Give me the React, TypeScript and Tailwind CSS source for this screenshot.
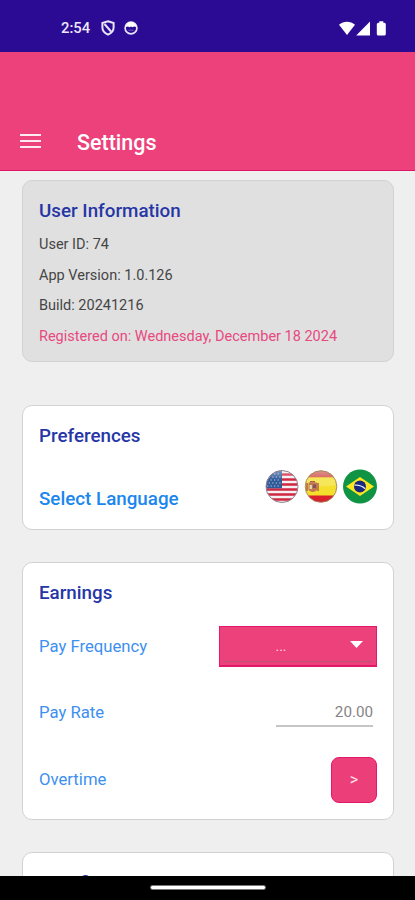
import type { ReactNode } from 'react';

function StatusBar() {
  return (
    <div className="flex h-[52px] shrink-0 items-center bg-[#2b0a94] pt-1 pr-[28px] pl-[61px] text-white">
      <span className="w-[40px] text-[14.8px] leading-5 font-medium text-[#ece8fb]">2:54</span>
      <svg className="h-4 w-[14px]" viewBox="0 0 14 16" fill="none" stroke="#e8e4fa" strokeWidth="2">
        <path d="M7 1.200 12.600 3v4.600c0 3.200-2 5.600-5.600 7-3.600-1.400-5.600-3.800-5.600-7V3z" />
        <path d="m3.500 4 6.500 7.500" />
      </svg>
      <svg className="ml-[9px] h-[14px] w-[14px]" viewBox="0 0 14 14">
        <circle cx="7" cy="7" r="5.900" fill="none" stroke="#e8e4fa" strokeWidth="1.700" />
        <path d="M1.500 6C2 3 4.500 1 7 1s5 2 5.500 5L10 5.500 8.500 6.200 7 5.500l-1.500.7L4 5.500z" fill="#fff" />
        <path d="M4.500 9.200h5" stroke="#6f5cc0" />
      </svg>
      <svg className="ml-auto h-[15px] w-[48px]" viewBox="0 0 48 15" fill="#fff">
        <path d="M0 3.800C4.500-.3 11.500-.3 16 3.800L8 14z" />
        <path d="M31 .6V14.400H17.200z" />
        <path d="M39.300 1.800h1V.3h4v1.500h1a1.500 1.500 0 0 1 1.500 1.500v9.700a1.500 1.500 0 0 1-1.500 1.500h-6a1.500 1.500 0 0 1-1.500-1.500V3.300a1.500 1.500 0 0 1 1.500-1.500z" />
      </svg>
    </div>
  );
}

function Header() {
  return (
    <header className="flex h-[119px] shrink-0 items-end border-b border-[#dc1768] bg-[#ed417b] pb-[13px] pl-5 text-white">
      <button aria-label="Menu" className="mb-[9px] flex w-[21px] flex-col gap-[4px]">
        <span className="h-[2px] bg-[#ffeaf2]" />
        <span className="h-[2px] bg-[#ffeaf2]" />
        <span className="h-[2px] bg-[#ffeaf2]" />
      </button>
      <h1 className="ml-9 text-[21.5px] leading-7 font-medium">Settings</h1>
    </header>
  );
}

function Card({ title, className, children }: { title: string; className: string; children?: ReactNode }) {
  return (
    <section className={`shrink-0 rounded-[10px] border border-[#d2d2d2] px-4 ${className}`}>
      <h2 className="pt-[18px] text-[18.8px] leading-6 font-medium text-[#2736a6]">{title}</h2>
      {children}
    </section>
  );
}

function UsFlag() {
  return (
    <svg className="h-[35px] w-[34px]" viewBox="0 0 34 35">
      <defs>
        <clipPath id="us">
          <circle cx="17" cy="17.500" r="16" />
        </clipPath>
        <linearGradient id="usShine" x1="0" y1="0" x2="0" y2="1">
          <stop offset="0" stopColor="#fff" stopOpacity=".45" />
          <stop offset=".6" stopColor="#fff" stopOpacity="0" />
        </linearGradient>
      </defs>
      <g clipPath="url(#us)">
        <path fill="#f4eff2" d="M0 0h34v35H0z" />
        <path
          stroke="#cf2740"
          strokeWidth="2.500"
          d="M0 5.500h34M0 10.500h34M0 15.500h34M0 20.500h34M0 25.500h34M0 30.500h34"
        />
        <path fill="#315a99" d="M0 0h17v19.200H0z" />
        <path
          stroke="#b4c8e3"
          strokeWidth="1.200"
          strokeDasharray="1.300 2.200"
          d="M2 5h14M3.700 8h13M2 11h14M3.700 14h13M2 17h14"
        />
        <path fill="url(#usShine)" d="M0 0h34v18H0z" />
      </g>
      <circle cx="17" cy="17.500" r="16" fill="none" stroke="#8f8290" />
    </svg>
  );
}

function SpainFlag() {
  return (
    <svg className="h-[35px] w-[34px]" viewBox="0 0 34 35">
      <defs>
        <clipPath id="es">
          <circle cx="17" cy="17.500" r="15.800" />
        </clipPath>
        <linearGradient id="esTop" x1="0" y1="0" x2="0" y2="1">
          <stop offset="0" stopColor="#db9a99" />
          <stop offset="1" stopColor="#db6b65" />
        </linearGradient>
      </defs>
      <g clipPath="url(#es)">
        <path fill="#f3df2c" d="M0 0h34v35H0z" />
        <path fill="url(#esTop)" d="M0 0h34v8.500H0z" />
        <path fill="#d9202c" d="M0 26.500h34V35H0z" />
        <path fill="#f6e65a" d="M0 8.500h34v7q-17 4-34 0z" />
        <path fill="#c0784f" d="M4.500 13.500h8.500v7.500q-4 4-8.500 0z" />
        <path stroke="#b05c48" strokeWidth="1.500" d="M3 14v8M14 14v8M6 12.800h5" />
        <path fill="#e8cfb2" d="M5.500 16h2.500v4H5.500z" />
        <path fill="#7b5360" d="M9 15.500h3v3.500H9z" />
      </g>
      <circle cx="17" cy="17.500" r="15.800" fill="none" stroke="#9d8462" strokeWidth=".9" />
    </svg>
  );
}

function BrazilFlag() {
  return (
    <svg className="h-[35px] w-[34px]" viewBox="0 0 34 35">
      <circle cx="17" cy="17.500" r="17" fill="#119344" />
      <path fill="#fce71f" d="M3 17.500 17 8l14 9.500L17 27z" />
      <circle cx="17" cy="17.500" r="6" fill="#182780" />
      <path d="M11.500 16.200q6-.7 10.700 3.500" fill="none" stroke="#dfe6f2" strokeWidth="1.200" />
    </svg>
  );
}

function Row({ label, className, children }: { label: string; className: string; children: ReactNode }) {
  return (
    <div className={`flex items-center justify-between ${className}`}>
      <span className="pt-px text-[16.7px] text-[#3d8ff0]">{label}</span>
      {children}
    </div>
  );
}

export default function App() {
  return (
    <div className="flex h-[900px] w-full flex-col overflow-hidden bg-[#efefef] font-[Roboto,sans-serif]">
      <StatusBar />
      <Header />

      <main className="flex min-h-0 flex-1 flex-col overflow-hidden pt-[9px] pr-[21px] pl-[22px]">
        <Card title="User Information" className="h-[182px] bg-[#e0e0e0]">
          <div className="mt-[7px] text-[14.5px] leading-[30.500px] text-[#454545]">
            <p>User ID: 74</p>
            <p>App Version: 1.0.126</p>
            <p>Build: 20241216</p>
            <p className="text-[#e8497f]">Registered on: Wednesday, December 18 2024</p>
          </div>
        </Card>

        <Card title="Preferences" className="mt-[43px] h-[125px] bg-white">
          <div className="mt-[21px] flex h-[37px] justify-between">
            <span className="pt-[18px] text-[18.8px] leading-6 font-medium text-[#1b86ee]">Select Language</span>
            <div className="flex gap-[5px]">
              <UsFlag />
              <SpainFlag />
              <BrazilFlag />
            </div>
          </div>
        </Card>

        <Card title="Earnings" className="mt-8 h-[258px] bg-white">
          <Row label="Pay Frequency" className="mt-[21px] h-[41px]">
            <button className="flex h-[41px] w-[158px] border border-b-2 border-[#e41868] bg-[#ed417b] px-[4px] pb-[3px]">
              <span className="flex flex-1 items-center border-b border-[#b95178] pr-[9px] text-white">
                <span className="flex-1 pt-[4px] pl-[4px] text-center text-[14px] text-[#ffd4e2]">...</span>
                <svg className="ml-[16px] h-[7px] w-[13px]" viewBox="0 0 13 7">
                  <path d="M0 0h13L6.500 7z" fill="#fff" />
                </svg>
              </span>
            </button>
          </Row>
          <Row label="Pay Rate" className="mt-[24px] h-[43px]">
            <span className="mr-1 h-[29px] w-[97px] border-b-2 border-[#c6c6c6] text-right text-[15.2px] leading-[29px] text-[#858585]">
              20.00
            </span>
          </Row>
          <Row label="Overtime" className="mt-[22px] h-[47px]">
            <button className="h-[46px] w-[46px] rounded-[8px] border border-[#e41868] bg-[#ec3f7a] text-[16px] text-[#ffe1eb]">
              &gt;
            </button>
          </Row>
        </Card>

        <Card title="Certifications" className="mt-8 h-[120px] bg-white" />
      </main>

      <footer className="flex h-[24px] shrink-0 justify-center bg-black pt-[9px]">
        <div className="h-[5px] w-[116px] rounded-full border border-[#777] bg-white" />
      </footer>
    </div>
  );
}
